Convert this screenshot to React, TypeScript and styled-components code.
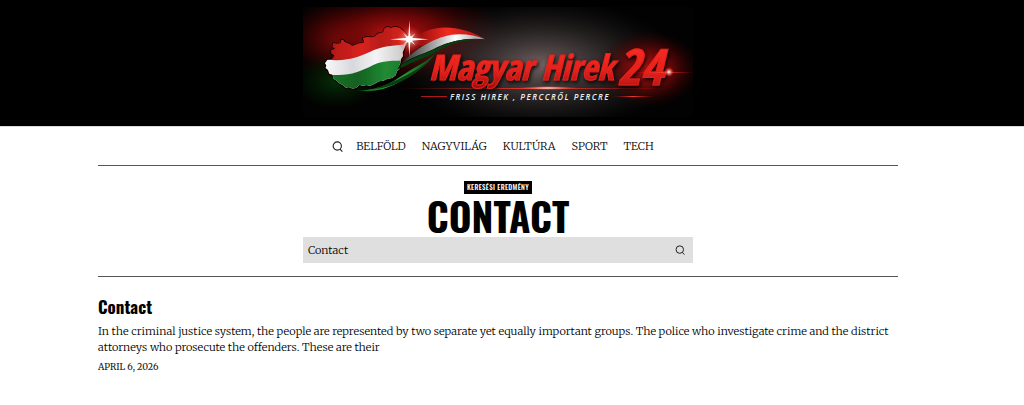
import React, { useState } from "react";
import styled, { createGlobalStyle } from "styled-components";

const serif = `Merriweather, "DejaVu Serif Condensed", "DejaVu Serif", serif`;
const display = `Oswald, "Liberation Sans Narrow", "Liberation Sans", sans-serif`;
const wordmark = `"Liberation Sans Narrow", "Open Sans Condensed", "Fira Sans Condensed", Oswald, sans-serif`;

const GlobalStyle = createGlobalStyle`
  *, *::before, *::after { box-sizing: border-box; }
  body { margin: 0; background: #fff; color: #000; font-family: ${serif}; }
`;

const Masthead = styled.header`
  display: flex;
  justify-content: center;
  padding: 7px 28px 9px 0;
  background: #000;
  border-bottom: 1px solid #ddd;
`;

const HomeLink = styled.a`
  display: block;
  width: 390px;
  max-width: 100%;
`;

const LogoArt = styled.svg`
  display: block;
  width: 100%;
  height: auto;
`;

const Page = styled.div`
  padding-right: 28px;
`;

const Container = styled.div`
  width: 100%;
  max-width: 800px;
  margin: 0 auto;
`;

const Nav = styled.nav`
  display: flex;
  align-items: center;
  justify-content: center;
  gap: 13px;
  height: 39px;
  padding-right: 10px;
  border-bottom: 1px solid #555;
`;

const NavList = styled.ul`
  display: flex;
  gap: 16px;
  margin: 0;
  padding: 0;
  list-style: none;
  line-height: 16px;
`;

const NavLink = styled.a`
  display: block;
  font-size: 11px;
  font-weight: 300;
  color: #000;
  text-decoration: none;
  text-transform: uppercase;
`;

const IconButton = styled.button`
  display: flex;
  padding: 0;
  border: 0;
  background: none;
  color: #222;
  cursor: pointer;
`;

const SearchHead = styled.section`
  display: flex;
  flex-direction: column;
  align-items: center;
  padding: 15px 0 13px;
  border-bottom: 1px solid #555;
`;

const Badge = styled.span`
  padding: 0 3px;
  background: #000;
  color: #fff;
  font: 500 7px/13px ${display};
  letter-spacing: 0.05em;
  text-transform: uppercase;
`;

const Title = styled.h1`
  margin: 0;
  font: 700 39px/43px ${display};
  text-transform: uppercase;
`;

const SearchForm = styled.form`
  display: flex;
  align-items: center;
  width: 390px;
  max-width: 100%;
  height: 26px;
  padding: 0 8px 0 5px;
  background: #dfdfdf;
`;

const SearchInput = styled.input`
  flex: 1;
  min-width: 0;
  padding: 0;
  border: 0;
  outline: 0;
  background: transparent;
  color: #000;
  font: 300 11px/16px ${serif};
`;

const Result = styled.article`
  padding: 19px 0;
`;

const ResultTitle = styled.h2`
  margin: 0 0 5px;
  font: 700 17px/22px ${display};
  a { color: inherit; text-decoration: none; }
`;

const Excerpt = styled.p`
  margin: 0 0 4px;
  font-size: 11px;
  font-weight: 300;
  line-height: 16px;
  color: #000;
`;

const PostDate = styled.time`
  display: block;
  font-size: 9px;
  line-height: 16px;
  color: #111;
  text-transform: uppercase;
`;

const SearchIcon = ({ size }: { size: number }) => (
  <svg width={size} height={size} viewBox="0 0 24 24" fill="none" stroke="currentColor" strokeWidth="2.4" aria-hidden="true">
    <circle cx="11.5" cy="11" r="9" />
    <path d="M17.5 17.5 22.5 23" />
  </svg>
);

const COUNTRY =
  "M75 190 L82 180 96 177 103 167 94 160 93 151 105 146 97 140 100 129 112 131 121 130 124 119 131 121 135 127 148 131 157 137 170 133 178 130 190 129 192 122 188 114 200 111 214 112 226 109 232 101 249 97 254 84 264 80 272 84 284 80 299 83 314 96 322 106 325 124 316 138 312 148 308 157 309 168 303 177 302 187 297 198 298 208 291 213 287 226 276 234 262 236 250 242 236 244 224 251 210 257 199 255 188 257 178 254 169 263 158 266 147 261 138 263 128 255 117 249 108 241 101 236 98 224 88 221 84 210 77 204 79 196 Z";

const Logo = () => (
  <LogoArt viewBox="0 0 390 110" role="img" aria-label="Magyar Hirek 24">
    <defs>
      <radialGradient id="redGlow">
        <stop offset="0" stopColor="#c41212" />
        <stop offset=".45" stopColor="#7a0707" stopOpacity=".8" />
        <stop offset="1" stopColor="#300" stopOpacity="0" />
      </radialGradient>
      <radialGradient id="greyGlow">
        <stop offset="0" stopColor="#857272" />
        <stop offset=".45" stopColor="#4a4242" stopOpacity=".75" />
        <stop offset="1" stopColor="#222" stopOpacity="0" />
      </radialGradient>
      <radialGradient id="greenGlow">
        <stop offset="0" stopColor="#06300a" />
        <stop offset="1" stopColor="#020" stopOpacity="0" />
      </radialGradient>
      <radialGradient id="spark">
        <stop offset="0" stopColor="#fff" />
        <stop offset=".3" stopColor="#ffb0a0" stopOpacity=".8" />
        <stop offset="1" stopColor="#f22" stopOpacity="0" />
      </radialGradient>
      <linearGradient id="letters" x1="0" y1="0" x2="0" y2="1">
        <stop offset=".2" stopColor="#fb2b22" />
        <stop offset=".6" stopColor="#e3201c" />
        <stop offset="1" stopColor="#960d0d" />
      </linearGradient>
      <linearGradient id="beam">
        <stop offset="0" stopColor="#d11" stopOpacity="0" />
        <stop offset=".5" stopColor="#f03a2c" />
        <stop offset="1" stopColor="#d11" stopOpacity="0" />
      </linearGradient>
      <linearGradient id="flagRed">
        <stop offset="0" stopColor="#a51413" />
        <stop offset=".45" stopColor="#d92320" />
        <stop offset=".65" stopColor="#b91a18" />
        <stop offset="1" stopColor="#e42a24" />
      </linearGradient>
      <linearGradient id="flagWhite">
        <stop offset="0" stopColor="#fff" />
        <stop offset=".35" stopColor="#d8d8dc" />
        <stop offset=".6" stopColor="#f4f4f6" />
        <stop offset="1" stopColor="#bbb" />
      </linearGradient>
      <linearGradient id="flagGreen">
        <stop offset="0" stopColor="#1d7a2a" />
        <stop offset=".4" stopColor="#126020" />
        <stop offset=".7" stopColor="#218a34" />
        <stop offset="1" stopColor="#1b7429" />
      </linearGradient>
      <linearGradient id="ribbonWhite">
        <stop offset="0" stopColor="#222" />
        <stop offset=".35" stopColor="#999" />
        <stop offset=".65" stopColor="#fff" />
        <stop offset="1" stopColor="#888" />
      </linearGradient>
      <linearGradient id="ribbonRed">
        <stop offset="0" stopColor="#7d0505" />
        <stop offset=".5" stopColor="#f12a20" />
        <stop offset="1" stopColor="#a81412" />
      </linearGradient>
      <linearGradient id="ribbonGreen">
        <stop offset="0" stopColor="#0b4d13" />
        <stop offset=".5" stopColor="#2fae3b" />
        <stop offset="1" stopColor="#0d4513" />
      </linearGradient>
      <clipPath id="country"><path d={COUNTRY} /></clipPath>
      <filter id="shadow" x="-20%" y="-20%" width="140%" height="150%">
        <feDropShadow dx="1" dy="2" stdDeviation="2" floodColor="#000" />
      </filter>
    </defs>
    <rect width="390" height="110" fill="#030202" />
    <ellipse cx="92" cy="28" rx="112" ry="46" fill="url(#redGlow)" />
    <ellipse cx="30" cy="35" rx="48" ry="42" fill="url(#redGlow)" opacity=".3" />
    <ellipse cx="34" cy="74" rx="42" ry="28" fill="url(#greenGlow)" />
    <ellipse cx="238" cy="58" rx="140" ry="66" fill="url(#greyGlow)" opacity=".85" />
    <ellipse cx="345" cy="62" rx="52" ry="38" fill="url(#redGlow)" />
    <g transform="translate(-3 -7) scale(.3333)">
      <g filter="url(#shadow)">
        <path d={COUNTRY} fill="#500" stroke="#1a0404" strokeWidth="4" />
        <g clipPath="url(#country)">
          <path d="M60 60H340V280H60Z" fill="url(#flagRed)" />
          <path d="M60 175C130 190 175 173 220 151C260 134 290 138 340 130V280H60Z" fill="url(#flagWhite)" />
          <path d="M60 219C135 234 170 220 220 195C250 180 275 183 340 180V280H60Z" fill="url(#flagGreen)" />
        </g>
      </g>
      <path d="M292 208C325 157 390 119 455 101Q505 98 558 119Q470 110 410 149C370 178 335 188 292 208Z" fill="#051008" />
      <path d="M330 126C380 72 470 67 556 118C490 96 435 101 365 138Z" fill="url(#ribbonRed)" />
      <path d="M302 195C330 157 398 113 455 104Q510 99 556 118Q480 109 411 142C365 167 345 164 302 195Z" fill="url(#ribbonWhite)" />
      <path d="M302 195C345 170 390 155 415 142Q476 110 554 119Q480 117 420 149C380 174 338 184 302 205Z" fill="#083d10" />
      <path d="M170 271C250 270 282 242 315 221C350 198 378 188 407 159C377 203 330 229 304 243Q240 282 170 271Z" fill="url(#ribbonGreen)" />
      <path d="M222 266C285 246 350 214 390 179C350 223 285 264 222 266Z" fill="#0a3d10" />
      <circle cx="328" cy="118" r="40" fill="url(#spark)" opacity=".7" />
      <path d="M328 60 331 113 386 118 331 122 328 171 325 122 270 118 325 113Z" fill="#fff" />
      <path d="M310 100 328 114 346 100 333 118 346 136 328 122 310 136 323 118Z" fill="#ffe5dc" />
      <circle cx="328" cy="118" r="10" fill="#fff" />
    </g>
    <rect x="98" y="81" width="270" height="1" fill="url(#beam)" />
    <ellipse cx="245" cy="81" rx="30" ry="2" fill="url(#spark)" />
    <rect x="118" y="89" width="26" height="1" fill="#b01818" />
    <rect x="310" y="89" width="40" height="1" fill="url(#beam)" />
    <g fontFamily={wordmark} fontWeight="700" fontStyle="italic" fill="url(#letters)" stroke="#e2221d" strokeWidth="1" filter="url(#shadow)">
      <text x="126" y="73" fontSize="35">Magyar Hirek</text>
      <text x="314" y="78" fontSize="50">24</text>
    </g>
    <text x="147" y="93" fontFamily={`"Open Sans", sans-serif`} fontWeight="600" fontStyle="italic" fontSize="8" letterSpacing="1.5" fill="#eee">
      FRISS HIREK , PERCCRŐL PERCRE
    </text>
    <rect x="330" y="65" width="60" height="1" fill="url(#beam)" />
    <circle cx="366" cy="65" r="5" fill="url(#spark)" />
  </LogoArt>
);

const sections = ["Belföld", "Nagyvilág", "Kultúra", "Sport", "Tech"];

export default function App() {
  const [query, setQuery] = useState("Contact");
  return (
    <>
      <GlobalStyle />
      <Masthead>
        <HomeLink href="/"><Logo /></HomeLink>
      </Masthead>
      <Page>
        <Container>
          <Nav>
            <IconButton type="button" aria-label="Search"><SearchIcon size={11} /></IconButton>
            <NavList>
              {sections.map((name) => (
                <li key={name}><NavLink href="#">{name}</NavLink></li>
              ))}
            </NavList>
          </Nav>
          <main>
            <SearchHead>
              <Badge>Keresési eredmény</Badge>
              <Title>Contact</Title>
              <SearchForm onSubmit={(e: React.FormEvent) => e.preventDefault()}>
                <SearchInput aria-label="Search" value={query} onChange={(e) => setQuery(e.target.value)} />
                <IconButton type="submit" aria-label="Submit search"><SearchIcon size={10} /></IconButton>
              </SearchForm>
            </SearchHead>
            <Result>
              <ResultTitle><a href="#">Contact</a></ResultTitle>
              <Excerpt>
                In the criminal justice system, the people are represented by two separate yet equally important groups.
                The police who investigate crime and the district attorneys who prosecute the offenders. These are their
              </Excerpt>
              <PostDate dateTime="2026-04-06">April 6, 2026</PostDate>
            </Result>
          </main>
        </Container>
      </Page>
    </>
  );
}
